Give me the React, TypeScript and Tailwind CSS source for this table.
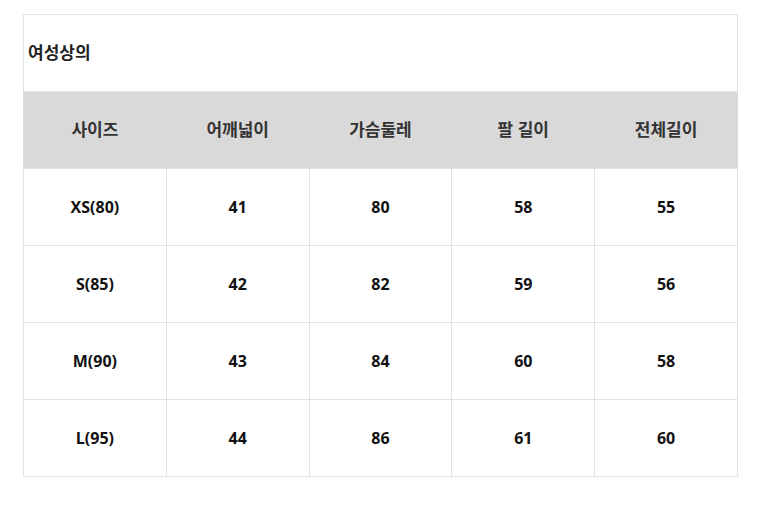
import React from 'react';

const headers = ['사이즈', '어깨넓이', '가슴둘레', '팔 길이', '전체길이'];

const rows = [
  ['XS(80)', '41', '80', '58', '55'],
  ['S(85)', '42', '82', '59', '56'],
  ['M(90)', '43', '84', '60', '58'],
  ['L(95)', '44', '86', '61', '60'],
];

export default function App() {
  return (
    <div className="min-h-screen bg-white pt-[14px] pl-[23px] font-['Open_Sans','Noto_Sans_CJK_KR',sans-serif] text-[#111]">
      <table className="w-[715px] table-fixed border-collapse border border-[#e2e2e2]">
        <thead>
          <tr>
            <th colSpan={5} className="h-[77px] border border-[#e2e2e2] pl-[4px] text-left text-[17px] font-semibold text-[#222]">
              여성상의
            </th>
          </tr>
          <tr className="bg-[#d9d9d9]">
            {headers.map((h) => (
              <th key={h} className="h-[77px] border-x border-[#d9d9d9] text-center text-[17px] font-semibold text-[#333]">
                {h}
              </th>
            ))}
          </tr>
        </thead>
        <tbody>
          {rows.map((r) => (
            <tr key={r[0]}>
              {r.map((c, i) => (
                <td key={i} className="h-[77px] border border-[#e2e2e2] text-center text-[16px] font-bold">
                  {c}
                </td>
              ))}
            </tr>
          ))}
        </tbody>
      </table>
    </div>
  );
}
